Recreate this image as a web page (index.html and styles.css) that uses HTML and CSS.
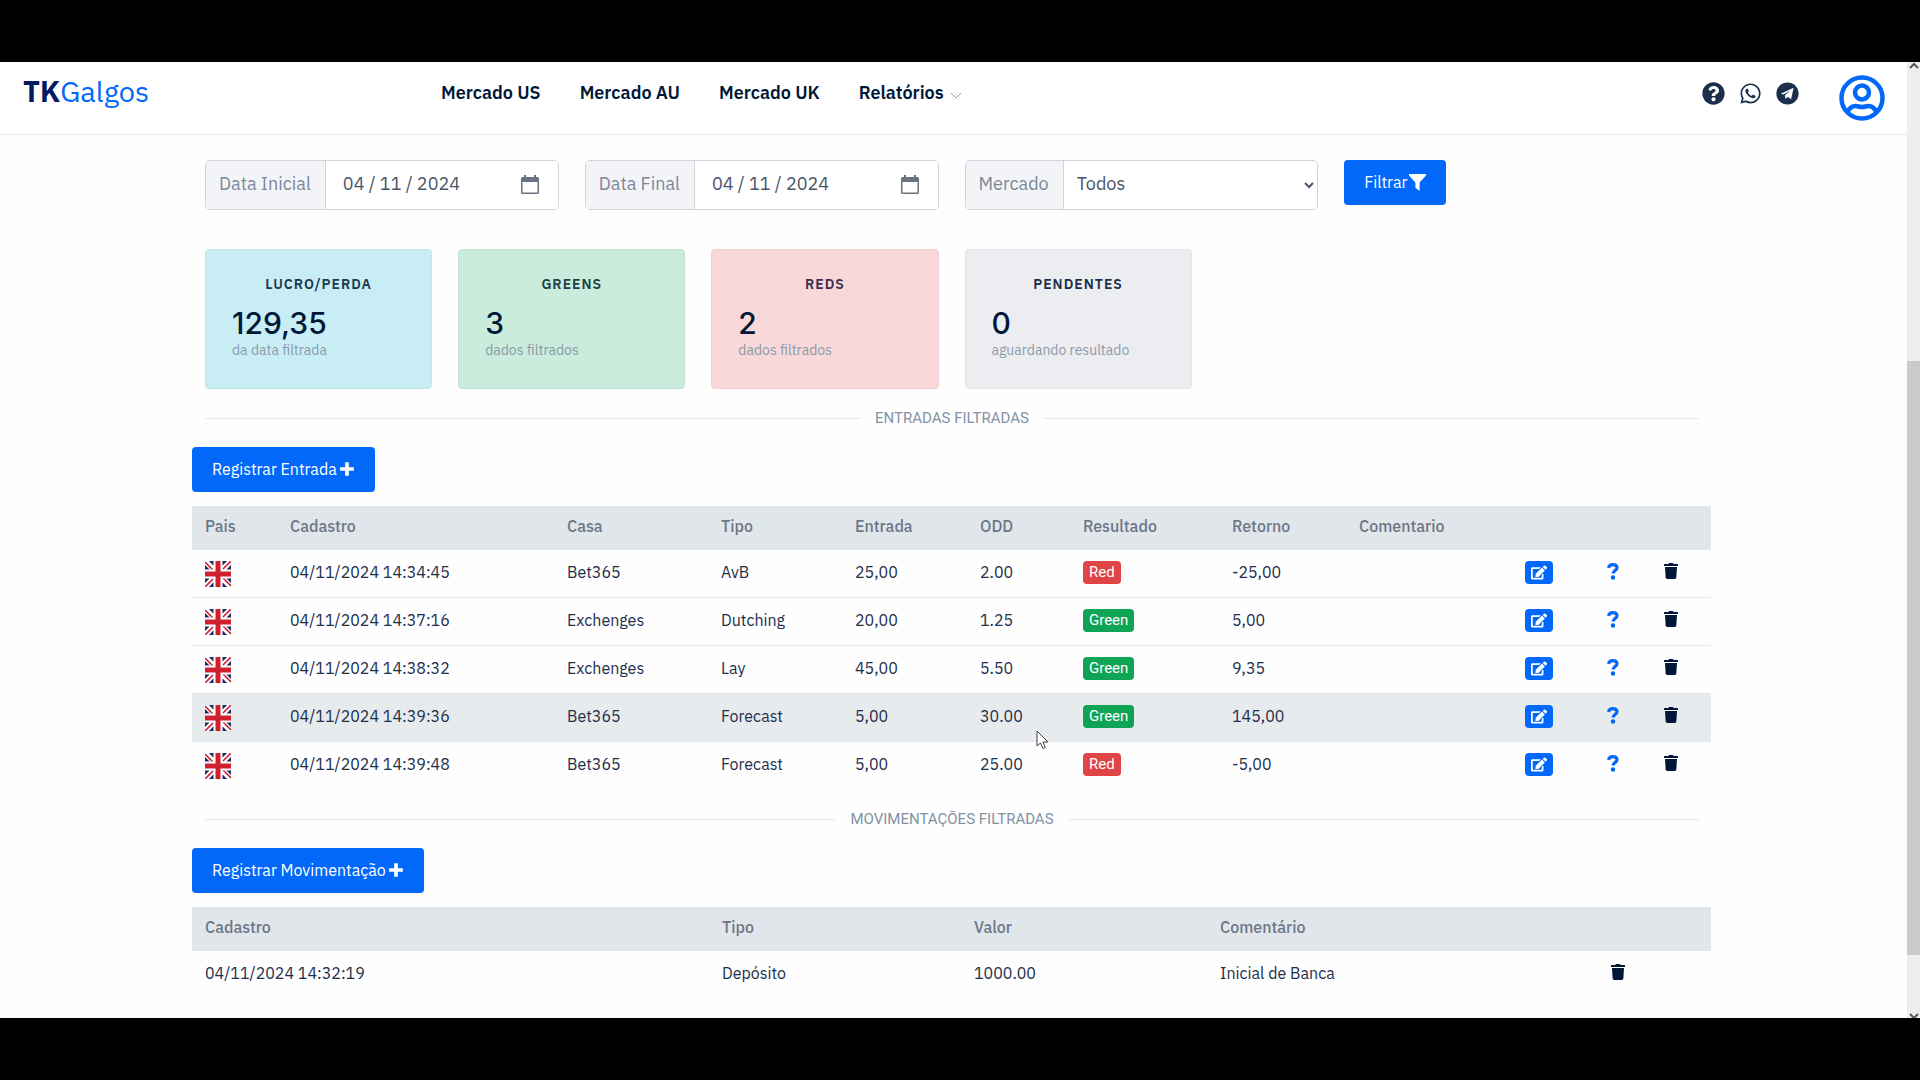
FILE: index.html
```html
<!DOCTYPE html>
<html lang="pt-BR">
<head>
<meta charset="utf-8">
<meta name="viewport" content="width=device-width, initial-scale=1">
<title>TKGalgos</title>
<link rel="stylesheet" href="styles.css">
</head>
<body>
<svg class="sprite" aria-hidden="true">
  <symbol id="plus" viewBox="0 0 14 14"><path d="M5.4 1h3.2v4.4H13v3.2H8.600V13H5.400V8.600H1V5.400h4.400z" fill="currentColor"/></symbol>
  <symbol id="flag" viewBox="0 0 26 26">
    <path fill="#1f2a5c" d="M0 0h26v26H0z"/>
    <path stroke="#fff" stroke-width="5.500" d="M0 0l26 26M26 0L0 26"/>
    <path stroke="#cf2436" stroke-width="1.600" d="M0 1l10 10M17 9l9-9M26 25L16 15M9 17l-9 9"/>
    <path fill="#fff" d="M8.500 0h9v8.500H26v9h-8.500V26h-9v-8.500H0v-9h8.500z"/>
    <path fill="#d0202e" d="M10.500 0h5v10.500H26v5H15.500V26h-5V15.500H0v-5h10.500z"/>
  </symbol>
  <symbol id="edit" viewBox="0 0 576 512"><path fill="currentColor" d="M402.600 83.200l90.200 90.200c3.800 3.800 3.800 10 0 13.800L274.400 405.600l-92.800 10.300c-12.400 1.400-22.900-9.100-21.500-21.500l10.300-92.800L388.800 83.200c3.800-3.800 10-3.800 13.800 0zm162-22.900l-48.800-48.800c-15.200-15.200-39.900-15.200-55.200 0l-35.400 35.400c-3.800 3.800-3.800 10 0 13.800l90.200 90.200c3.800 3.800 10 3.800 13.800 0l35.400-35.400c15.200-15.300 15.200-40 0-55.200zM384 346.200V448H64V128h229.800c3.200 0 6.200-1.300 8.500-3.500l40-40c7.600-7.600 2.200-20.500-8.500-20.500H48C21.500 64 0 85.500 0 112v352c0 26.500 21.500 48 48 48h352c26.500 0 48-21.500 48-48V306.200c0-10.700-12.900-16-20.500-8.500l-40 40c-2.200 2.300-3.500 5.300-3.500 8.500z"/></symbol>
  <symbol id="question" viewBox="0 0 12 17"><path d="M1.400 4.900C1.900 2.800 3.500 1.600 5.900 1.600c2.500 0 4.100 1.300 4.100 3.200 0 2.800-3.900 2.600-3.900 5.700" fill="none" stroke="currentColor" stroke-width="3.200"/><circle cx="6" cy="14.500" r="2.200" fill="currentColor"/></symbol>
  <symbol id="trash" viewBox="0 0 448 512"><path fill="currentColor" d="M432 32H312l-9.400-18.700A24 24 0 0 0 281.100 0H166.800a23.720 23.720 0 0 0-21.400 13.300L136 32H16A16 16 0 0 0 0 48v32a16 16 0 0 0 16 16h416a16 16 0 0 0 16-16V48a16 16 0 0 0-16-16zM32 128h384l-21.200 339a48 48 0 0 1-47.900 45H101.100a48 48 0 0 1-47.900-45z"/></symbol>
  <symbol id="calendar" viewBox="0 0 20 20"><path fill="currentColor" fill-rule="evenodd" d="M4 0h2v2h8V0h2v2h1.500A1.500 1.500 0 0 1 19 3.500v14a1.500 1.500 0 0 1-1.500 1.500h-15A1.500 1.500 0 0 1 1 17.500v-14A1.500 1.500 0 0 1 2.500 2H4zM2.500 7v10.500h15V7z"/></symbol>
</svg>

<div class="window">
  <div class="page">
    <header class="topbar">
      <a class="brand" href="#"><b>TK</b>Galgos</a>
      <nav class="menu">
        <a href="#">Mercado US</a>
        <a href="#">Mercado AU</a>
        <a href="#">Mercado UK</a>
        <a href="#">Relatórios <svg class="caret" viewBox="0 0 12 8"><path d="M1 1l5 5 5-5" fill="none" stroke="#9aa3ad"/></svg></a>
      </nav>
      <div class="social">
        <a href="#" aria-label="Ajuda"><svg class="icon-head" viewBox="0 0 512 512"><path fill="currentColor" d="M504 256c0 137-111 248-248 248S8 393 8 256C8 119.100 119 8 256 8s248 111.100 248 248zM262.700 90c-54.500 0-89.300 23-116.500 63.800-3.500 5.300-2.400 12.400 2.700 16.300l34.700 26.300c5.200 3.900 12.600 3 16.700-2.100 17.900-22.700 30.100-35.800 57.300-35.800 20.400 0 45.700 13.100 45.700 33 0 15-12.400 22.700-32.500 34C247.100 238.500 216 255 216 296v4c0 6.600 5.400 12 12 12h56c6.600 0 12-5.400 12-12v-1.300c0-28.700 83.800-29.900 83.800-107.500C379.700 132.600 319.200 90 262.700 90zM256 338c-25.400 0-46 20.600-46 46s20.600 46 46 46 46-20.600 46-46-20.600-46-46-46z"/></svg></a>
        <a href="#" aria-label="WhatsApp"><svg class="icon-head" viewBox="-32 0 512 512"><path fill="currentColor" d="M380.900 97.100C339 55.100 283.200 32 223.900 32c-122.400 0-222 99.600-222 222 0 39.100 10.200 77.300 29.600 111L0 480l117.700-30.900c32.400 17.700 68.900 27 106.100 27h.1c122.300 0 224.100-99.600 224.100-222 0-59.300-25.200-115-67.100-157zM223.900 438.700c-33.200 0-65.700-8.900-94-25.700l-6.700-4-69.800 18.300L72 359.200l-4.400-7c-18.500-29.400-28.200-63.300-28.200-98.200 0-101.700 82.800-184.500 184.600-184.500 49.300 0 95.600 19.200 130.400 54.100 34.800 34.900 56.200 81.200 56.100 130.500 0 101.800-84.900 184.600-186.600 184.600zm101.200-138.200c-5.500-2.800-32.800-16.200-37.900-18-5.100-1.900-8.800-2.800-12.500 2.800-3.700 5.600-14.300 18-17.600 21.800-3.200 3.700-6.500 4.200-12 1.400-32.600-16.300-54-29.100-75.500-66-5.700-9.800 5.700-9.100 16.300-30.300 1.800-3.700.9-6.900-.5-9.700-1.400-2.800-12.500-30.100-17.100-41.200-4.500-10.800-9.100-9.300-12.500-9.500-3.200-.2-6.900-.2-10.600-.2-3.700 0-9.700 1.400-14.800 6.900-5.100 5.600-19.400 19-19.400 46.300 0 27.300 19.900 53.700 22.600 57.400 2.800 3.700 39.100 59.700 94.800 83.800 35.200 15.200 49 16.500 66.600 13.900 10.700-1.600 32.800-13.400 37.400-26.400 4.600-13 4.600-24.100 3.200-26.400-1.300-2.500-5-3.900-10.500-6.600z"/></svg></a>
        <a href="#" aria-label="Telegram"><svg class="icon-head" viewBox="0 0 24 24"><circle cx="12" cy="12" r="11.600" fill="currentColor"/><path fill="#fff" d="M5 12.300L18.300 6.100 15.800 18l-3.700-2.700-2.200 2.400-.6-4 5.600-4.600-7.300 4z"/></svg></a>
      </div>
      <a class="profile" href="#" aria-label="Perfil"><svg class="icon-user" viewBox="0 0 46 46" fill="none" stroke="currentColor" stroke-width="4.500"><circle cx="23" cy="23" r="20.500"/><circle cx="23" cy="17.500" r="7"/><path d="M8.500 37c2-4 5-6 8-6 2.500 0 3.500 1 6.500 1s4-1 6.500-1c3 0 6 2 8 6"/></svg></a>
    </header>

    <main class="content">
      <form class="filters">
        <div class="group">
          <label for="inicio">Data Inicial</label>
          <input id="inicio" type="text" value="04 / 11 / 2024">
          <button class="pick" type="button" aria-label="Abrir calendário"><svg class="icon-cal"><use href="#calendar"/></svg></button>
        </div>
        <div class="group">
          <label for="fim">Data Final</label>
          <input id="fim" type="text" value="04 / 11 / 2024">
          <button class="pick" type="button" aria-label="Abrir calendário"><svg class="icon-cal"><use href="#calendar"/></svg></button>
        </div>
        <div class="group">
          <label for="mercado">Mercado</label>
          <select id="mercado"><option>Todos</option></select>
        </div>
        <div><button class="btn" type="button">Filtrar <svg class="icon-filter" viewBox="0 0 16 16"><path fill="currentColor" d="M0 0h16v1.500L10 8v8l-4-3V8L0 1.500z"/></svg></button></div>
      </form>

      <section class="cards">
        <article class="card card-info"><h3>LUCRO/PERDA</h3><strong>129,35</strong><p>da data filtrada</p></article>
        <article class="card card-success"><h3>GREENS</h3><strong>3</strong><p>dados filtrados</p></article>
        <article class="card card-danger"><h3>REDS</h3><strong>2</strong><p>dados filtrados</p></article>
        <article class="card card-muted"><h3>PENDENTES</h3><strong>0</strong><p>aguardando resultado</p></article>
      </section>

      <h2 class="divider">ENTRADAS FILTRADAS</h2>
      <button class="btn" type="button">Registrar Entrada <svg class="icon-plus"><use href="#plus"/></svg></button>
      <table class="grid">
        <colgroup><col class="w-pais"><col class="w-cadastro"><col class="w-casa"><col class="w-tipo"><col class="w-entrada"><col class="w-odd"><col class="w-resultado"><col class="w-retorno"><col class="w-comentario"><col class="w-editar"><col class="w-info"><col class="w-excluir"></colgroup>
        <thead><tr><th>Pais</th><th>Cadastro</th><th>Casa</th><th>Tipo</th><th>Entrada</th><th>ODD</th><th>Resultado</th><th>Retorno</th><th>Comentario</th><th></th><th></th><th></th></tr></thead>
        <tbody>
          <tr><td><svg class="flag"><use href="#flag"/></svg></td><td>04/11/2024 14:34:45</td><td>Bet365</td><td>AvB</td><td>25,00</td><td>2.00</td><td><span class="badge red">Red</span></td><td>-25,00</td><td></td><td><button class="edit" aria-label="Editar"><svg class="icon-edit"><use href="#edit"/></svg></button></td><td><button class="bare info" aria-label="Detalhes"><svg class="icon-q"><use href="#question"/></svg></button></td><td><button class="bare" aria-label="Excluir"><svg class="icon-trash"><use href="#trash"/></svg></button></td></tr>
          <tr><td><svg class="flag"><use href="#flag"/></svg></td><td>04/11/2024 14:37:16</td><td>Exchenges</td><td>Dutching</td><td>20,00</td><td>1.25</td><td><span class="badge green">Green</span></td><td>5,00</td><td></td><td><button class="edit" aria-label="Editar"><svg class="icon-edit"><use href="#edit"/></svg></button></td><td><button class="bare info" aria-label="Detalhes"><svg class="icon-q"><use href="#question"/></svg></button></td><td><button class="bare" aria-label="Excluir"><svg class="icon-trash"><use href="#trash"/></svg></button></td></tr>
          <tr><td><svg class="flag"><use href="#flag"/></svg></td><td>04/11/2024 14:38:32</td><td>Exchenges</td><td>Lay</td><td>45,00</td><td>5.50</td><td><span class="badge green">Green</span></td><td>9,35</td><td></td><td><button class="edit" aria-label="Editar"><svg class="icon-edit"><use href="#edit"/></svg></button></td><td><button class="bare info" aria-label="Detalhes"><svg class="icon-q"><use href="#question"/></svg></button></td><td><button class="bare" aria-label="Excluir"><svg class="icon-trash"><use href="#trash"/></svg></button></td></tr>
          <tr class="active"><td><svg class="flag"><use href="#flag"/></svg></td><td>04/11/2024 14:39:36</td><td>Bet365</td><td>Forecast</td><td>5,00</td><td>30.00</td><td><span class="badge green">Green</span></td><td>145,00</td><td></td><td><button class="edit" aria-label="Editar"><svg class="icon-edit"><use href="#edit"/></svg></button></td><td><button class="bare info" aria-label="Detalhes"><svg class="icon-q"><use href="#question"/></svg></button></td><td><button class="bare" aria-label="Excluir"><svg class="icon-trash"><use href="#trash"/></svg></button></td></tr>
          <tr><td><svg class="flag"><use href="#flag"/></svg></td><td>04/11/2024 14:39:48</td><td>Bet365</td><td>Forecast</td><td>5,00</td><td>25.00</td><td><span class="badge red">Red</span></td><td>-5,00</td><td></td><td><button class="edit" aria-label="Editar"><svg class="icon-edit"><use href="#edit"/></svg></button></td><td><button class="bare info" aria-label="Detalhes"><svg class="icon-q"><use href="#question"/></svg></button></td><td><button class="bare" aria-label="Excluir"><svg class="icon-trash"><use href="#trash"/></svg></button></td></tr>
        </tbody>
      </table>

      <h2 class="divider">MOVIMENTAÇÕES FILTRADAS</h2>
      <button class="btn" type="button">Registrar Movimentação <svg class="icon-plus"><use href="#plus"/></svg></button>
      <table class="grid">
        <colgroup><col class="m-cadastro"><col class="m-tipo"><col class="m-valor"><col class="m-comentario"><col class="m-excluir"></colgroup>
        <thead><tr><th>Cadastro</th><th>Tipo</th><th>Valor</th><th>Comentário</th><th></th></tr></thead>
        <tbody><tr><td>04/11/2024 14:32:19</td><td>Depósito</td><td>1000.00</td><td>Inicial de Banca</td><td><button class="bare" aria-label="Excluir"><svg class="icon-trash"><use href="#trash"/></svg></button></td></tr></tbody>
      </table>
    </main>
  </div>
  <div class="scrollbar" aria-hidden="true">
    <svg class="arrow" viewBox="0 0 13 8"><path d="M3 6l4-4 4 4" fill="none" stroke="#555" stroke-width="2"/></svg>
    <span class="thumb"></span>
    <svg class="arrow" viewBox="0 0 13 8"><path d="M3 4l4 4 4-4" fill="none" stroke="#555" stroke-width="2"/></svg>
  </div>
  <svg class="pointer" viewBox="0 0 13 20" aria-hidden="true"><path d="M1 1v15l3.500-3 2.400 5.500 2.400-1L7 12h5z" fill="#fff" stroke="#444"/></svg>
</div>
</body>
</html>
```

FILE: styles.css
```css
* { box-sizing: border-box; }

body {
  display: flex;
  min-height: 100vh;
  margin: 0;
  padding: 62px 0;
  background: #000;
  color: #1b2e4b;
  font: 16px/22px "IBM Plex Sans", "Noto Sans", sans-serif;
}

a { color: inherit; text-decoration: none; }
button, input, select { font: inherit; color: inherit; }
h2, h3, p { margin: 0; }
svg { display: block; }
.sprite { position: absolute; width: 0; height: 0; }

.window {
  position: relative;
  display: flex;
  flex: 1;
  min-width: 0;
  background: #fefefe;
}
.page { flex: 1; min-width: 0; }

/* Header */
.topbar {
  display: flex;
  align-items: flex-start;
  height: 73px;
  padding: 0 22px 0 23px;
  border-bottom: 1px solid #e8eaed;
  background: #fff;
}
.brand {
  width: 418px;
  padding-top: 11px;
  color: #0168fa;
  font-size: 29px;
  line-height: 36px;
}
.brand b { color: #031a61; font-weight: 700; }
.menu {
  display: flex;
  flex: 1;
  gap: 39px;
  padding-top: 20px;
  color: #001737;
  font-size: 18px;
  font-weight: 600;
}
.menu a { display: flex; align-items: center; gap: 6px; }
.caret { width: 12px; height: 8px; margin-top: 6px; }
.social { display: flex; gap: 14px; padding: 20px 40px 0 0; color: #1b2e4b; }
.icon-head { width: 23px; height: 23px; }
.profile { padding-top: 13px; color: #0168fa; }
.icon-user { width: 46px; height: 46px; }

.content { padding: 25px 196px 0 192px; }

/* Filters */
.filters {
  display: grid;
  grid-template-columns: repeat(4, 1fr);
  gap: 26px;
  padding: 0 13px;
}
.group {
  display: flex;
  height: 50px;
  border: 1px solid #ced4da;
  border-radius: 5px;
  overflow: hidden;
  background: #fff;
  font-size: 18px;
}
.group label {
  display: flex;
  align-items: center;
  padding: 0 14px 2px 13px;
  border-right: 1px solid #ced4da;
  background: #f3f4f7;
  color: #7c8798;
}
.group input, .group select {
  flex: 1;
  min-width: 0;
  padding: 0 17px 2px;
  border: 0;
  background: #fff;
  color: #4a5568;
}
.group select { padding: 0 9px 3px; }
.pick { padding: 0 18px; border: 0; background: #fff; color: #6b7280; }
.icon-cal { width: 20px; height: 20px; }

.btn {
  display: inline-flex;
  align-items: center;
  gap: 2px;
  height: 45px;
  padding: 0 20px 1px;
  border: 0;
  border-radius: 4px;
  background: #0168fa;
  color: #fff;
}
.icon-filter { width: 17px; height: 17px; }
.icon-plus { width: 16px; height: 16px; }

/* Summary cards */
.cards {
  display: grid;
  grid-template-columns: repeat(6, 1fr);
  gap: 26px;
  margin-top: 39px;
  padding: 0 13px;
}
.card {
  height: 140px;
  padding: 23px 26px;
  border: 1px solid;
  border-radius: 4px;
}
.card h3 {
  font-size: 14px;
  font-weight: 600;
  letter-spacing: 1px;
  text-align: center;
}
.card strong {
  display: block;
  margin-top: 10px;
  color: #001737;
  font: 500 30px/36px Inter, sans-serif;
}
.card p { color: #8c9aa8; font-size: 14px; line-height: 18px; }
.card-info { border-color: #bfe6ee; background: #c8edf5; color: #1b3a50; }
.card-success { border-color: #bfe3d2; background: #c9ecdc; color: #1b4048; }
.card-danger { border-color: #efcfcf; background: #f8d8d8; color: #3a2e4b; }
.card-muted { border-color: #e3e5e9; background: #ecedf1; }

/* Section headings */
.divider {
  display: flex;
  align-items: center;
  gap: 14px;
  margin: 18px 12px 18px 13px;
  color: #8392a5;
  font: 15px/22px Roboto, sans-serif;
}
.divider::before, .divider::after {
  content: "";
  flex: 1;
  border-top: 1px solid #e5e9f2;
}

/* Tables */
.grid {
  width: 100%;
  margin-top: 14px;
  border-spacing: 0;
  table-layout: fixed;
  text-align: left;
}
.grid th {
  height: 44px;
  padding: 9px 13px 13px;
  background: #e1e6ea;
  color: #6b7688;
  font-weight: 500;
}
.grid td {
  height: 48px;
  padding: 11px 0 10px 13px;
  border-bottom: 1px solid #e5e9ee;
  vertical-align: top;
  white-space: nowrap;
}
.grid tr:last-child td { border-bottom: 0; }
.grid .active td { background: #e8ebed; }
.flag { width: 26px; height: 26px; }
.badge {
  display: block;
  width: fit-content;
  padding: 0 6px;
  border-radius: 4px;
  color: #fff;
  font: 15px/23px Roboto, sans-serif;
}
.red { background: #e04446; }
.green { background: #0fa355; }
.edit {
  display: block;
  padding: 4px 6px;
  border: 0;
  border-radius: 4px;
  background: #0168fa;
  color: #fff;
}
.icon-edit { width: 16px; height: 15px; }
.bare { display: block; padding: 2px 0; border: 0; background: none; color: #001737; }
.info { color: #0168fa; }
.icon-q { width: 12px; height: 17px; }
.icon-trash { width: 14px; height: 16px; }

.w-pais { width: 85px; }
.w-cadastro { width: 277px; }
.w-casa { width: 154px; }
.w-tipo { width: 134px; }
.w-entrada { width: 125px; }
.w-odd { width: 103px; }
.w-resultado { width: 149px; }
.w-retorno { width: 127px; }
.w-comentario { width: 166px; }
.w-editar { width: 82px; }
.w-info { width: 57px; }
.w-excluir { width: 60px; }
.m-cadastro { width: 517px; }
.m-tipo { width: 252px; }
.m-valor { width: 246px; }
.m-comentario { width: 391px; }
.m-excluir { width: 113px; }

/* Page scrollbar */
.scrollbar {
  display: grid;
  grid-template-rows: 8px 291fr 594fr 55fr 8px;
  width: 13px;
  background: #eee;
}
.arrow { width: 13px; height: 8px; }
.arrow:last-child { grid-row: 5; }
.thumb { grid-row: 3; background: #cacaca; }

.pointer { position: absolute; left: 1036px; top: 668px; width: 13px; height: 20px; }
```
